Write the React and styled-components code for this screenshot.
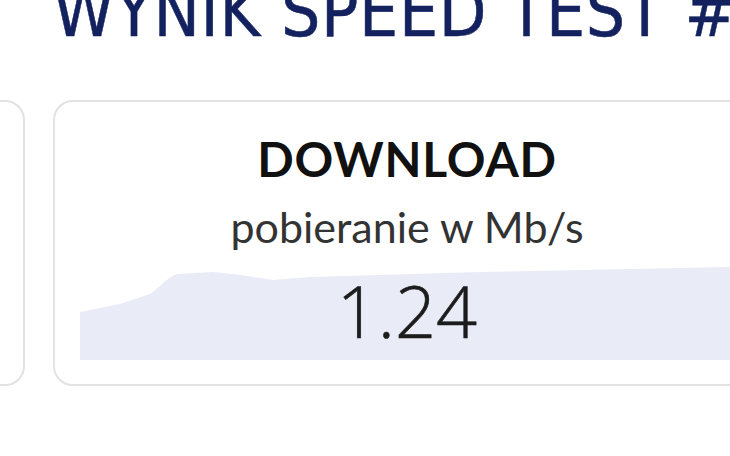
import React from "react";
import styled, { createGlobalStyle } from "styled-components";

const Global = createGlobalStyle`
  html, body { margin: 0; padding: 0; background: #ffffff; }
  body { width: 730px; height: 456px; overflow: hidden; }
`;

const Page = styled.div`
  width: 730px;
  height: 456px;
  overflow: hidden;
  background: #ffffff;
`;

const Title = styled.h1`
  margin: -22px 0 0 0;
  padding-left: 53px;
  font-family: "DejaVu Sans Condensed", "DejaVu Sans", sans-serif;
  font-weight: 400;
  font-size: 69px;
  line-height: 1;
  letter-spacing: 0.6px;
  color: #13215e;
  -webkit-text-stroke: 0.5px #13215e;
  white-space: nowrap;
`;

const CardRow = styled.div`
  display: flex;
  gap: 28px;
  margin-top: 53px;
  margin-left: -683px;
`;

const Card = styled.div`
  flex: 0 0 708px;
  height: 286px;
  box-sizing: border-box;
  border: 2px solid #e2e2e2;
  border-radius: 20px;
  padding: 33px 25px 0;
  display: flex;
  flex-direction: column;
  align-items: center;
  font-family: "Lato", "Open Sans", sans-serif;
`;

const Heading = styled.div`
  font-size: 48px;
  font-weight: 700;
  line-height: 1;
  color: #111111;
  letter-spacing: 0.8px;
`;

const Sub = styled.div`
  margin-top: 22px;
  font-size: 43px;
  font-weight: 400;
  line-height: 1;
  color: #333333;
`;

const Chart = styled.div`
  position: relative;
  align-self: stretch;
  margin-top: 17px;
  height: 95px;
  display: flex;
  justify-content: center;
  padding-top: 9px;
  box-sizing: border-box;
`;

const ChartSvg = styled.svg`
  position: absolute;
  inset: 0;
  width: 100%;
  height: 100%;
`;

const Value = styled.div`
  position: relative;
  font-family: "Open Sans", "Lato", sans-serif;
  font-weight: 300;
  font-size: 72px;
  line-height: 1;
  color: #1c1c1c;
  -webkit-text-stroke: 0.6px #1c1c1c;
`;

function SpeedCard({ title, subtitle, value, points }) {
  return (
    <Card>
      <Heading>{title}</Heading>
      <Sub>{subtitle}</Sub>
      <Chart>
        <ChartSvg viewBox="0 0 654 95" preserveAspectRatio="none">
          <path d={points} fill="#e9ebf6" />
        </ChartSvg>
        <Value>{value}</Value>
      </Chart>
    </Card>
  );
}

const downloadPath =
  "M0 47 L40 39 L70 29 C80 22 88 12 97 9 L133 7 L160 10 L193 15 L230 12 L400 7 L654 2 L654 95 L0 95 Z";

export default function App() {
  return (
    <Page>
      <Global />
      <Title>WYNIK SPEED TEST #3</Title>
      <CardRow>
        <SpeedCard title="PING" subtitle="opóźnienie w ms" value="24" points={downloadPath} />
        <SpeedCard
          title="DOWNLOAD"
          subtitle="pobieranie w Mb/s"
          value="1.24"
          points={downloadPath}
        />
      </CardRow>
    </Page>
  );
}
